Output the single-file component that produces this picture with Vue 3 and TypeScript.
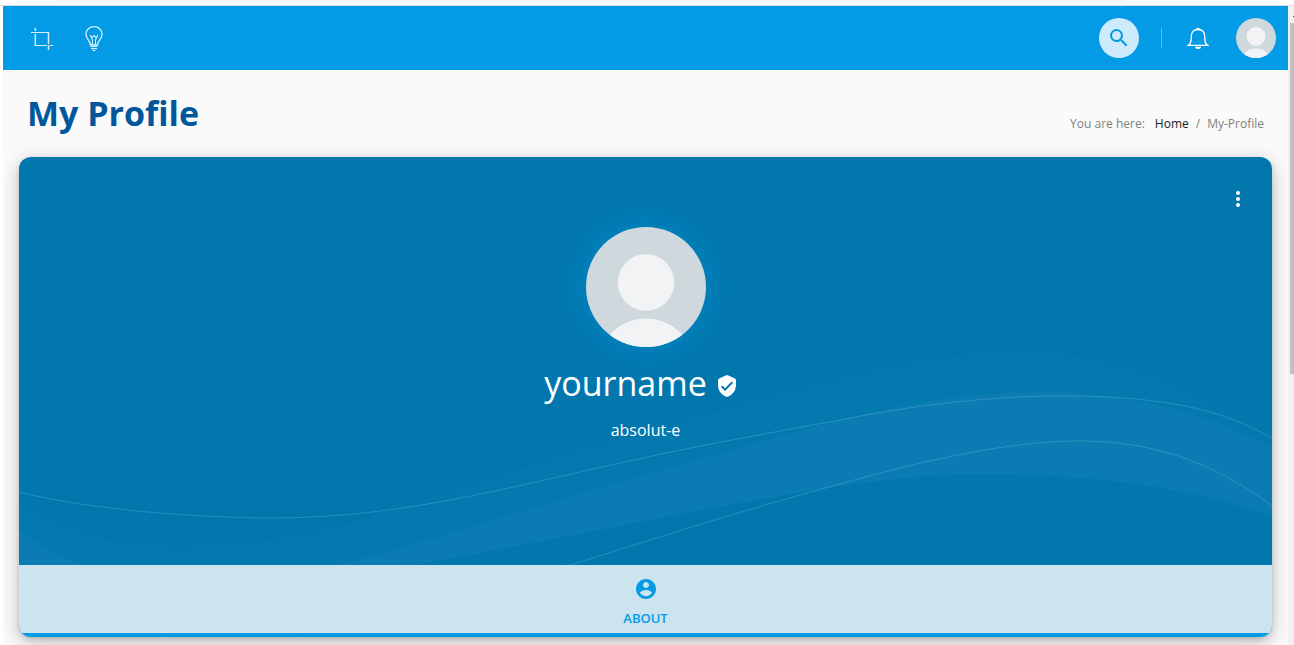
<script setup lang="ts">
import { ref } from 'vue'

interface Crumb {
  label: string
  href?: string
}

interface Tab {
  id: string
  label: string
}

const crumbs: Crumb[] = [{ label: 'Home', href: '#home' }, { label: 'My-Profile' }]
const tabs: Tab[] = [{ id: 'about', label: 'About' }]
const activeTab = ref('about')
const user = { name: 'yourname', handle: 'absolut-e' }
</script>

<template>
  <div class="window">
    <div class="chrome"><span class="address"></span></div>
    <div class="viewport">
      <div class="page">
        <header class="topbar">
          <nav class="tools" aria-label="Tools">
            <button class="icon-btn" type="button" aria-label="Crop">
              <svg width="24" height="24" viewBox="0 0 24 24" fill="none" stroke="currentColor">
                <path d="M1 6.500H19M5 19.500H17M20 19.500H23" />
                <path d="M5.300 2V5M5.300 8V20M18.500 6V18M18.500 19V24" stroke-width="1.500" />
              </svg>
            </button>
            <button class="icon-btn" type="button" aria-label="Ideas">
              <svg width="20" height="26" viewBox="0 0 20 26" fill="none" stroke="currentColor">
                <path d="M6.500 20C6.500 15.500 2 14.500 2 9.300a8 7.700 0 0 1 16 0c0 5.200-4.500 6.200-4.500 10.700z" stroke-width="1.400" />
                <path d="M8.500 20V15L6.300 10M11.500 20V15L13.700 10M8 12.500l2-2 2 2" stroke-width="1.100" />
                <path d="M6.500 21.500h7M7 23.500h6M8.500 25.400h3" stroke-width="1.200" />
              </svg>
            </button>
          </nav>
          <div class="actions">
            <button class="search" type="button" aria-label="Search">
              <svg width="24" height="24" viewBox="0 0 24 24" fill="currentColor">
                <path d="M15.500 14h-.79l-.28-.27A6.471 6.471 0 0 0 16 9.500 6.500 6.500 0 1 0 9.500 16c1.610 0 3.090-.59 4.230-1.570l.27.28v.79l5 4.990L20.490 19zm-6 0C7.010 14 5 11.990 5 9.500S7.010 5 9.500 5 14 7.010 14 9.500 11.990 14 9.500 14" />
              </svg>
            </button>
            <span class="divider"></span>
            <button class="icon-btn bell" type="button" aria-label="Notifications">
              <svg width="22" height="24" viewBox="0 0 22 24" fill="none" stroke="currentColor" stroke-width="1.300">
                <path d="M1.300 19.400C4 17.500 4.300 15.500 4.300 10.500C4.300 6 7 3.500 11 3.500S17.700 6 17.700 10.500C17.700 15.500 18 17.500 20.700 19.400Z" />
                <path d="M9.800 3.500a1.200 1 0 0 1 2.400 0" />
                <path d="M8 20.800h6a3 2.200 0 0 1-6 0" fill="currentColor" stroke="none" />
              </svg>
            </button>
            <button class="avatar small" type="button" aria-label="Account">
              <svg viewBox="0 0 120 120">
                <circle cx="60" cy="55.500" r="28.300" />
                <ellipse cx="60" cy="134" rx="46" ry="42.500" />
              </svg>
            </button>
          </div>
        </header>

        <div class="heading">
          <h1>My Profile</h1>
          <nav class="crumbs" aria-label="Breadcrumb">
            <span class="lead">You are here:</span>
            <template v-for="(c, i) in crumbs" :key="c.label">
              <span v-if="i > 0" class="sep">/</span>
              <a v-if="c.href" :href="c.href">{{ c.label }}</a>
              <span v-else>{{ c.label }}</span>
            </template>
          </nav>
        </div>

        <main class="card">
          <svg class="waves" viewBox="19 157 1253 480" preserveAspectRatio="none" aria-hidden="true">
            <path
              class="band faint"
              d="M19 506C70 532 120 547 180 547C300 547 400 508 517 470C620 437 730 407 840 378C910 360 970 352 1020 352C1110 352 1190 384 1272 440V518C1170 482 1080 475 970 475C870 475 700 510 533 543C420 565 300 587 200 587C130 587 70 580 19 568Z"
            />
            <path
              class="band"
              d="M19 531C70 567 130 586 200 586C300 586 440 534 533 508C620 481 710 457 803 430C890 406 960 392 1040 392C1130 392 1210 415 1272 447V516C1170 480 1060 474 970 474C870 475 700 510 533 543C420 565 300 585 200 585C130 585 70 580 19 565Z"
            />
            <path
              class="line"
              d="M19 492C90 510 200 518 273 518C400 518 510 487 620 463C700 445 770 433 840 420C900 408 980 396 1060 396C1160 396 1220 408 1272 438"
            />
            <path
              class="line"
              d="M19 580C80 615 150 638 230 638C340 638 470 594 570 565C660 537 750 508 840 484C930 459 1010 441 1080 441C1150 441 1210 460 1272 506"
            />
          </svg>

          <section class="hero">
            <button class="more" type="button" aria-label="More options">
              <svg width="24" height="24" viewBox="0 0 24 24" fill="currentColor">
                <circle cx="12" cy="6" r="2" />
                <circle cx="12" cy="12" r="2" />
                <circle cx="12" cy="18" r="2" />
              </svg>
            </button>
            <div class="avatar large">
              <svg viewBox="0 0 120 120">
                <circle cx="60" cy="55.500" r="28.300" />
                <ellipse cx="60" cy="134" rx="46" ry="42.500" />
              </svg>
            </div>
            <h2>
              {{ user.name }}
              <svg width="24" height="24" viewBox="0 0 24 24" fill="currentColor">
                <path
                  fill-rule="evenodd"
                  d="M11.200 1.300 4.200 4.400C3.500 4.700 3 5.400 3 6.200V11c0 5.550 3.840 10.740 9 12 5.160-1.260 9-6.450 9-12V6.200c0-.8-.5-1.500-1.200-1.800l-7-3.100a2 2 0 0 0-1.600 0M10 17l-4-4 1.410-1.410L10 14.170l6.590-6.590L18 9z"
                />
              </svg>
            </h2>
            <p>{{ user.handle }}</p>
          </section>

          <nav class="tabs" aria-label="Profile sections">
            <button
              v-for="t in tabs"
              :key="t.id"
              type="button"
              class="tab"
              :class="{ active: t.id === activeTab }"
              @click="activeTab = t.id"
            >
              <svg width="24" height="24" viewBox="0 0 24 24" fill="currentColor">
                <path d="M12 2C6.480 2 2 6.480 2 12s4.480 10 10 10 10-4.480 10-10S17.520 2 12 2m0 3c1.660 0 3 1.340 3 3s-1.340 3-3 3-3-1.340-3-3 1.340-3 3-3m0 14.200c-2.500 0-4.710-1.280-6-3.220.03-1.990 4-3.080 6-3.080 1.990 0 5.970 1.090 6 3.080-1.290 1.940-3.500 3.220-6 3.220" />
              </svg>
              <span>{{ t.label }}</span>
            </button>
          </nav>
        </main>
      </div>
      <div class="scrollbar"><span class="arrow"></span><span class="thumb"></span></div>
    </div>
  </div>
</template>

<style>
body {
  background: #fff;
}
</style>

<style scoped>
* {
  box-sizing: border-box;
}
.window {
  display: flex;
  flex-direction: column;
  min-height: 100vh;
  font-family: 'Open Sans', 'Noto Sans', sans-serif;
}
.chrome {
  height: 6px;
  padding: 0 170px 0 56px;
  border-bottom: 1px solid #dcdedf;
}
.address {
  display: block;
  height: 1px;
  background: #f1f3f4;
}
.viewport {
  flex: 1;
  display: grid;
  grid-template-columns: minmax(0, 1fr) 6px;
  padding-left: 3px;
}
.page {
  background: #fafafa;
  overflow: hidden;
}
button {
  border: 0;
  padding: 0;
  background: none;
  font: inherit;
  color: inherit;
  cursor: pointer;
}
svg {
  display: block;
}
.topbar {
  display: flex;
  align-items: center;
  justify-content: space-between;
  height: 64px;
  padding: 0 12px 0 27px;
  background: #039be5;
  color: #d5effc;
}
.tools,
.actions {
  display: flex;
  align-items: center;
}
.tools {
  gap: 30px;
}
.search {
  display: grid;
  place-items: center;
  width: 40px;
  height: 40px;
  border-radius: 50%;
  background: #cdebfb;
  color: #039be5;
}
.divider {
  width: 1px;
  height: 20px;
  margin: 0 25px 0 22px;
  background: #5abeee;
}
.bell {
  margin-right: 27px;
  color: #fff;
}
.avatar {
  border-radius: 50%;
  overflow: hidden;
  background: #cfd8dd;
}
.avatar svg {
  width: 100%;
  height: 100%;
  fill: #f1f3f5;
}
.small {
  width: 40px;
  height: 40px;
}
.large {
  width: 120px;
  height: 120px;
  box-shadow: 0 0 36px rgba(3, 155, 229, 0.5);
}
.heading {
  display: flex;
  align-items: center;
  justify-content: space-between;
  height: 87px;
  padding: 0 24px;
}
h1 {
  margin: 0;
  padding-bottom: 2px;
  font-size: 34px;
  line-height: 48px;
  font-weight: 700;
  color: #01579b;
}
.crumbs {
  display: flex;
  align-items: center;
  gap: 7px;
  padding-top: 21px;
  font-size: 12px;
  line-height: 20px;
  color: #808080;
}
.crumbs .lead {
  margin-right: 3px;
}
.crumbs a {
  color: #212121;
  text-decoration: none;
}
.card {
  position: relative;
  margin: 0 16px 8px;
  border-radius: 12px;
  overflow: hidden;
  background: #0277ad;
  box-shadow:
    0 2px 4px rgba(0, 0, 0, 0.12),
    0 5px 18px rgba(0, 0, 0, 0.25);
}
.waves {
  position: absolute;
  inset: 0;
  width: 100%;
  height: 100%;
}
.band {
  fill: #0a7cb3;
}
.faint {
  fill: #0379af;
}
.line {
  fill: none;
  stroke: #7fd0d8;
  stroke-opacity: 0.28;
}
.hero {
  position: relative;
  display: flex;
  flex-direction: column;
  align-items: center;
  height: 408px;
  padding-top: 70px;
  color: #fff;
}
.more {
  position: absolute;
  top: 30px;
  right: 22px;
}
h2 {
  display: flex;
  align-items: center;
  gap: 8px;
  margin: 12px 0 0;
  padding-right: 8px;
  font-size: 34px;
  line-height: 48px;
  font-weight: 400;
}
h2 svg {
  margin-top: 6px;
}
.hero p {
  margin: 11px 0 0;
  font-size: 16px;
  line-height: 24px;
}
.tabs {
  position: relative;
  display: flex;
  background: rgba(255, 255, 255, 0.8);
}
.tab {
  flex: 1;
  display: flex;
  flex-direction: column;
  align-items: center;
  gap: 7px;
  height: 72px;
  padding-top: 12px;
  border-bottom: 4px solid transparent;
  color: #039be5;
  font-size: 13px;
  line-height: 20px;
  font-weight: 600;
  text-transform: uppercase;
}
.tab.active {
  border-bottom-color: #039be5;
}
.scrollbar {
  padding-left: 2px;
  background: #f1f1f1;
}
.arrow {
  display: flex;
  justify-content: flex-end;
  align-items: flex-end;
  height: 17px;
  padding-bottom: 6px;
}
.arrow::after {
  content: '';
  width: 1px;
  height: 1px;
  background: #505050;
}
.thumb {
  display: block;
  height: 55%;
  background: #c1c1c1;
}
</style>
